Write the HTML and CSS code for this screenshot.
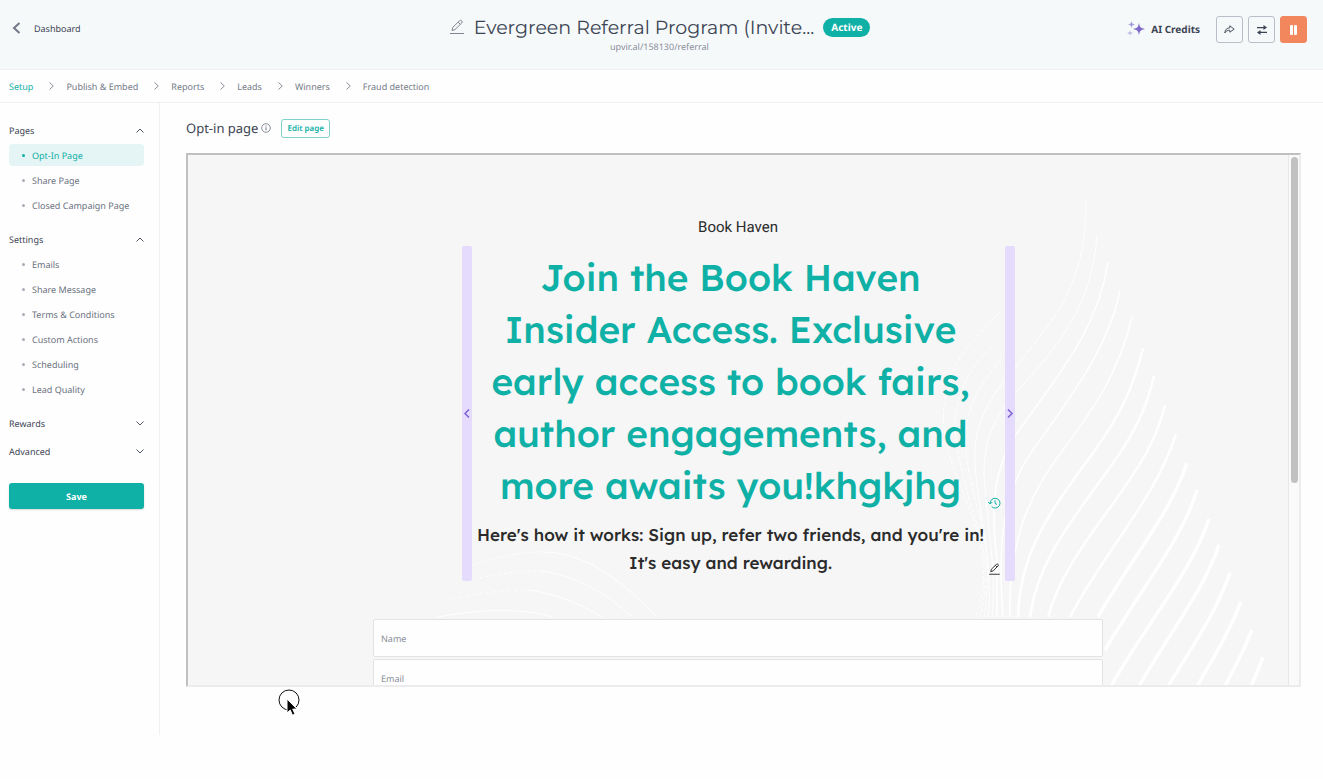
FILE: index.html
```html
<!DOCTYPE html>
<html lang="en">
<head>
  <meta charset="UTF-8">
  <meta name="viewport" content="width=device-width, initial-scale=1.0">
  <title>Evergreen Referral Program - Setup</title>
  <link rel="stylesheet" href="styles.css">
</head>
<body>
  <!-- Top bar -->
  <header class="topbar">
    <a href="#" class="back-link">
      <svg width="9" height="12" viewBox="0 0 9 12" fill="none" stroke="#747786" stroke-width="2"><path d="M7.500 1L2 6l5.500 5"/></svg>
      Dashboard
    </a>
    <div class="campaign">
      <div class="campaign-row">
        <button class="icon-btn" aria-label="Rename campaign">
          <svg width="16" height="16" viewBox="0 0 16 16" fill="none" stroke="#82858f"><path d="M1 14.500h14M3 11.500l.8-3.200L10.500 1.800a1.400 1.400 0 0 1 2.200 2.200L6 10.600zM9.200 3.200l2.100 2.100"/></svg>
        </button>
        <h1 class="campaign-title">Evergreen Referral Program (Invite...</h1>
        <span class="badge">Active</span>
      </div>
      <a href="#" class="campaign-url">upvir.al/158130/referral</a>
    </div>
    <div class="actions">
      <a href="#" class="credits">
        <svg width="18" height="16" viewBox="0 0 18 16"><path fill="#7e6bc9" d="M12 2c.8 4 1.500 5 6 6-4.500 1-5.200 2-6 6-.8-4-1.500-5-6-6 4.500-1 5.200-2 6-6z"/><path fill="#a79bdc" d="M4.500 0c.5 2.400 1 3 3.500 3.500C5.500 4 5 4.600 4.500 7 4 4.600 3.500 4 1 3.500 3.500 3 4 2.400 4.500 0z"/><path fill="#c4bbe6" d="M3 9c.4 2 .8 2.500 3 3-2.200.5-2.600 1-3 3-.4-2-.8-2.500-3-3 2.200-.5 2.600-1 3-3z"/></svg>
        AI Credits
      </a>
      <button class="square-btn" aria-label="Share">
        <svg width="11" height="9" viewBox="0 0 11 9" fill="none" stroke="#4c5361" stroke-linejoin="round"><path d="M.8 8C1 4.600 2.800 3 5.800 2.800V.8L10.200 4.200 5.800 7.200V5.200C3.600 5.200 2 6 .8 8z"/></svg>
      </button>
      <button class="square-btn" aria-label="Switch campaign">
        <svg width="10" height="10" viewBox="0 0 10 10" fill="#3c4454"><path d="M0 2h6.500V0L10 2.600 6.500 5V3.300H0zM10 6.700H3.500V5L0 7.400 3.500 10V8H10z"/></svg>
      </button>
      <button class="square-btn square-btn-pause" aria-label="Pause campaign">
        <svg width="8" height="10" viewBox="0 0 8 10" fill="#fff"><rect width="3" height="10" rx="1"/><rect x="4" width="3" height="10" rx="1"/></svg>
      </button>
    </div>
  </header>

  <!-- Steps -->
  <nav class="steps">
    <a href="#" class="step active">Setup</a>
    <svg class="step-arrow" width="5" height="8" viewBox="0 0 5 8"><path d="M.5.5L4.300 4 .5 7.500"/></svg>
    <a href="#" class="step">Publish &amp; Embed</a>
    <svg class="step-arrow" width="5" height="8" viewBox="0 0 5 8"><path d="M.5.5L4.300 4 .5 7.500"/></svg>
    <a href="#" class="step">Reports</a>
    <svg class="step-arrow" width="5" height="8" viewBox="0 0 5 8"><path d="M.5.5L4.300 4 .5 7.500"/></svg>
    <a href="#" class="step">Leads</a>
    <svg class="step-arrow" width="5" height="8" viewBox="0 0 5 8"><path d="M.5.5L4.300 4 .5 7.500"/></svg>
    <a href="#" class="step">Winners</a>
    <svg class="step-arrow" width="5" height="8" viewBox="0 0 5 8"><path d="M.5.5L4.300 4 .5 7.500"/></svg>
    <a href="#" class="step">Fraud detection</a>
  </nav>

  <div class="workspace">
    <!-- Sidebar -->
    <aside class="sidebar">
      <section class="group">
        <button class="group-head" aria-expanded="true">Pages
          <svg class="chevron" width="8" height="5" viewBox="0 0 8 5"><path d="M.5 4.500L4 1l3.500 3.500"/></svg>
        </button>
        <ul class="group-list">
          <li><a href="#" class="group-item active">Opt-In Page</a></li>
          <li><a href="#" class="group-item">Share Page</a></li>
          <li><a href="#" class="group-item">Closed Campaign Page</a></li>
        </ul>
      </section>
      <section class="group">
        <button class="group-head" aria-expanded="true">Settings
          <svg class="chevron" width="8" height="5" viewBox="0 0 8 5"><path d="M.5 4.500L4 1l3.500 3.500"/></svg>
        </button>
        <ul class="group-list">
          <li><a href="#" class="group-item">Emails</a></li>
          <li><a href="#" class="group-item">Share Message</a></li>
          <li><a href="#" class="group-item">Terms &amp; Conditions</a></li>
          <li><a href="#" class="group-item">Custom Actions</a></li>
          <li><a href="#" class="group-item">Scheduling</a></li>
          <li><a href="#" class="group-item">Lead Quality</a></li>
        </ul>
      </section>
      <section class="group closed">
        <button class="group-head" aria-expanded="false">Rewards
          <svg class="chevron" width="8" height="5" viewBox="0 0 8 5"><path d="M.5.5L4 4 7.500.5"/></svg>
        </button>
      </section>
      <section class="group closed">
        <button class="group-head" aria-expanded="false">Advanced
          <svg class="chevron" width="8" height="5" viewBox="0 0 8 5"><path d="M.5.5L4 4 7.500.5"/></svg>
        </button>
      </section>
      <button class="save-btn">Save</button>
    </aside>

    <main class="editor">
      <div class="editor-head">
        <h2 class="editor-title">Opt-in page</h2>
        <svg width="10" height="10" viewBox="0 0 10 10" fill="none" stroke="#6b7280"><circle cx="5" cy="5" r="4.300" stroke-width=".8"/><path d="M5 4.300v3M5 2.500v1"/></svg>
        <button class="edit-btn">Edit page</button>
      </div>

      <div class="preview">
        <div class="preview-page">
          <!-- Wave lines behind the page -->
          <svg class="waves" viewBox="188 155 1100 530" preserveAspectRatio="xMidYMin slice" fill="none" stroke="#fff">
            <g stroke-width="1">
              <path stroke-dasharray="3 2" d="M473 565Q515 551 545 552"/>
              <path d="M545 552C590 553 625 585 657 617"/>
              <path stroke-dasharray="3 3" d="M480 578Q510 571 540 571"/>
              <path d="M540 571C575 575 608 594 632 617"/>
              <path stroke-dasharray="3 4" d="M452 599Q490 590 530 590"/>
              <path d="M530 590C557 594 580 604 602 617"/>
              <path d="M438 617C475 610 520 607 553 617"/>
            </g>
            <g stroke-width="1">
              <path stroke-dasharray="4 2" d="M1000 312C970 342 953 362 948 385C938 420 946 448 958 480C978 530 993 570 976 617"/>
              <path stroke-dasharray="4 2" d="M992 347C965 372 957 396 955 425C956 465 974 510 981 540C988 570 986 595 980 617"/>
              <path stroke-dasharray="5 2" d="M1002 359C978 385 969 405 965 435C966 475 982 520 986 550C989 580 987 600 984 617"/>
              <path stroke-dasharray="8 2" d="M1086 201C1086 290 1052 320 1015 368"/>
              <path d="M1015 368C978 410 974 435 975 465C979 515 994 570 988 617"/>
              <path d="M1097 235C1092 305 1060 345 1015 393C988 425 984 450 984 475C987 525 997 570 992 617"/>
            </g>
            <g stroke-width="1.500">
              <path d="M1108 262C1098 330 1058 375 1015 436C990 475 992 520 997 560V617"/>
              <path d="M1120 290C1110 345 1072 395 1033 450C1000 495 998 555 1003 617"/>
              <path d="M1132 317C1118 375 1094 408 1063 450C1025 498 1008 550 1010 617"/>
            </g>
            <g stroke-width="2.500">
              <path d="M1143 348C1133 390 1118 418 1095 450C1050 512 1020 550 1018 617"/>
              <path d="M1154 376C1147 405 1138 425 1122 450C1080 512 1038 555 1030 617"/>
              <path d="M1165 405C1160 425 1154 438 1148 450C1115 510 1065 555 1048 617"/>
              <path d="M1176 434C1155 500 1105 550 1070 617"/>
            </g>
            <g stroke-width="3.500">
              <path d="M1187 463C1170 515 1130 560 1098 617"/>
              <path d="M1197 490C1182 540 1140 590 1105 650"/>
              <path d="M1209 519C1190 575 1145 625 1110 688"/>
              <path d="M1219 545C1204 590 1168 635 1138 688"/>
              <path d="M1230 573C1215 615 1190 650 1167 688"/>
              <path d="M1241 602C1228 635 1212 660 1196 688"/>
              <path d="M1252 630C1244 650 1235 667 1224 688"/>
              <path d="M1263 657C1259 668 1255 678 1250 688"/>
            </g>
          </svg>

          <p class="brand">Book Haven</p>

          <div class="edit-block">
            <button class="block-handle" aria-label="Previous version">
              <svg width="6" height="9" viewBox="0 0 6 9"><path d="M5 .5l-4 4 4 4"/></svg>
            </button>
            <div class="block-body">
              <div class="block-row">
                <h3 class="headline">Join the Book Haven<br>Insider Access. Exclusive<br>early access to book fairs,<br>author engagements, and<br>more awaits you!khgkjhg</h3>
                <button class="icon-btn" aria-label="Text history">
                  <svg width="13" height="12" viewBox="0 0 13 12" fill="none" stroke="#0fb0a6"><path d="M2.200 6.500A4.900 4.900 0 1 1 3.600 9.600M0 5l2.200 2 2-2M7 3.300v3l2 1.200"/></svg>
                </button>
              </div>
              <div class="block-row">
                <p class="subline">Here's how it works: Sign up, refer two friends, and you're in!<br>It's easy and rewarding.</p>
                <button class="icon-btn" aria-label="Edit text">
                  <svg width="13" height="12" viewBox="0 0 16 16" fill="none" stroke="#333" stroke-width="1.300"><path d="M1 15h14M3 11.500l.8-3.200L10.500 1.800a1.400 1.400 0 0 1 2.200 2.200L6 10.600zM9.200 3.200l2.100 2.100"/></svg>
                </button>
              </div>
            </div>
            <button class="block-handle" aria-label="Next version">
              <svg width="6" height="9" viewBox="0 0 6 9"><path d="M1 .5l4 4-4 4"/></svg>
            </button>
          </div>

          <form class="signup">
            <input type="text" class="field" placeholder="Name" aria-label="Name">
            <input type="email" class="field" placeholder="Email" aria-label="Email">
          </form>
        </div>
        <div class="scrollbar"><div class="scroll-thumb"></div></div>
      </div>
    </main>
  </div>

  <!-- Pointer over the page -->
  <svg class="pointer" width="24" height="30" viewBox="0 0 24 30"><circle cx="12" cy="12" r="10" fill="none" stroke="#111"/><path d="M10 11v14l3.200-3 2.300 5.200 2.500-1.100-2.300-5H20z" fill="#000" stroke="#fff"/></svg>
</body>
</html>
```
FILE: styles.css
```css
* {
  box-sizing: border-box;
}

body {
  display: flex;
  flex-direction: column;
  height: 100vh;
  margin: 0;
  padding-bottom: 44px;
  background-color: #fefefe;
  color: #3c4454;
  font-family: "Noto Sans", sans-serif;
  font-size: 9px;
  text-rendering: geometricPrecision;
}

h1, h2, h3, p, ul {
  margin: 0;
  padding: 0;
  font-weight: 400;
}

a {
  color: inherit;
  text-decoration: none;
}

button {
  padding: 0;
  border: none;
  background: none;
  color: inherit;
  font: inherit;
  text-rendering: inherit;
  cursor: pointer;
}

svg {
  display: block;
  flex-shrink: 0;
}

/* Top bar */
.topbar {
  display: grid;
  grid-template-columns: 1fr auto 1fr;
  height: 70px;
  padding: 15px 16px 0 12px;
  border-bottom: 1px solid #eff2f3;
  background-color: #f5f9fa;
}

.back-link {
  display: flex;
  align-items: center;
  gap: 13px;
  height: 26px;
}

.campaign {
  text-align: center;
}

.campaign-row {
  display: flex;
  align-items: center;
  gap: 9px;
  height: 24px;
}

.campaign-title {
  font-family: Montserrat, Inter, sans-serif;
  font-size: 19px;
}

.badge {
  padding: 0 8px;
  border-radius: 10px;
  background-color: #0fb0a6;
  color: #fff;
  font-size: 10px;
  font-weight: 700;
  line-height: 19px;
}

.campaign-url {
  color: #8b8f9a;
  line-height: 16px;
}

.actions {
  display: flex;
  justify-content: flex-end;
  gap: 5px;
}

.credits {
  display: flex;
  align-items: center;
  gap: 6px;
  height: 28px;
  margin-right: 11px;
  font-size: 10px;
  font-weight: 700;
}

.square-btn {
  display: flex;
  align-items: center;
  justify-content: center;
  width: 27px;
  height: 27px;
  margin-top: 1px;
  border: 1px solid #b9bec8;
  border-radius: 3px;
}

.square-btn-pause {
  border-color: #f2865c;
  background-color: #f2865c;
}

/* Steps */
.steps {
  display: flex;
  align-items: center;
  gap: 12px;
  height: 33px;
  padding-left: 9px;
  border-bottom: 1px solid #eff0f2;
  color: #747a87;
}

.step.active {
  color: #0fb0a6;
}

.step-arrow {
  margin-left: 4px;
  fill: none;
  stroke: #8b8f9a;
}

/* Sidebar */
.workspace {
  display: flex;
  flex: 1;
  min-height: 0;
}

.sidebar {
  width: 160px;
  padding: 16px 15px 0 9px;
  border-right: 1px solid #eff0f2;
}

.group {
  margin-bottom: 12px;
}

.group.closed {
  margin-bottom: 6px;
}

.group-head {
  display: flex;
  align-items: center;
  justify-content: space-between;
  width: 100%;
  height: 22px;
}

.chevron {
  fill: none;
  stroke: #4c5361;
}

.group-list {
  display: grid;
  gap: 3px;
  margin-top: 3px;
  list-style: none;
}

.group-item {
  display: flex;
  align-items: center;
  gap: 7px;
  height: 22px;
  padding-left: 13px;
  border-radius: 4px;
  color: #6b7280;
}

.group-item::before {
  content: "";
  width: 3px;
  height: 3px;
  border-radius: 50%;
  background-color: #a9adb8;
}

.group-item.active {
  background-color: #e5f5f5;
  color: #0fb0a6;
}

.group-item.active::before {
  background-color: #0fb0a6;
}

.save-btn {
  width: 100%;
  height: 26px;
  margin-top: 15px;
  border-radius: 3px;
  background-color: #0fb0a6;
  box-shadow: 0 1px 2px rgba(0, 0, 0, 0.15);
  color: #fff;
  font-weight: 700;
}

/* Editor */
.editor {
  display: flex;
  flex: 1;
  flex-direction: column;
  padding: 15px 22px 48px 26px;
}

.editor-head {
  display: flex;
  align-items: center;
  gap: 3px;
  height: 20px;
  margin-bottom: 15px;
}

.editor-title {
  font-size: 13px;
}

.edit-btn {
  height: 19px;
  margin-left: 7px;
  padding: 0 5px;
  border: 1px solid #7fd2cc;
  border-radius: 3px;
  color: #0fb0a6;
  font-size: 8px;
  font-weight: 600;
}

.preview {
  display: flex;
  flex: 1;
  min-height: 0;
  overflow: hidden;
  border: 2px solid #c0c0c0;
  border-right-color: #ececee;
  border-bottom-color: #ececee;
}

.preview-page {
  position: relative;
  flex: 1;
  overflow: hidden;
  padding-top: 62px;
  background-color: #f6f6f6;
}

.waves {
  position: absolute;
  top: 0;
  left: 0;
  width: 100%;
  height: 100%;
}

.brand {
  position: relative;
  color: #2b2b2b;
  font-family: Roboto, sans-serif;
  font-size: 15px;
  line-height: 20px;
  text-align: center;
}

.edit-block {
  position: relative;
  display: flex;
  width: 553px;
  max-width: 100%;
  margin: 9px auto 38px;
}

.block-handle {
  display: flex;
  align-items: center;
  justify-content: center;
  width: 10px;
  border-radius: 2px;
  background-color: #e4dbfd;
}

.block-handle path {
  fill: none;
  stroke: #7e5fd0;
  stroke-width: 1.5;
}

.block-body {
  flex: 1;
  padding: 6px 4px 3px 2px;
}

.block-row {
  display: flex;
  align-items: flex-end;
}

.block-row + .block-row {
  margin-top: 10px;
}

.block-row .icon-btn {
  padding-bottom: 3px;
}

.headline,
.subline {
  flex: 1;
  font-family: Lexend, Inter, sans-serif;
  font-weight: 500;
  text-align: center;
  white-space: nowrap;
}

.headline {
  color: #0fb0a6;
  font-size: 37px;
  line-height: 52px;
}

.subline {
  color: #2b2b2b;
  font-size: 17px;
  line-height: 28px;
}

.signup {
  position: relative;
  display: grid;
  gap: 2px;
  width: 730px;
  max-width: 100%;
  margin: 0 auto;
}

.field {
  height: 38px;
  padding: 0 7px;
  border: 1px solid #e2e3e5;
  border-radius: 2px;
  background-color: #fefefe;
  font: inherit;
  text-rendering: inherit;
}

.field::placeholder {
  color: #8b8f9a;
}

.scrollbar {
  width: 11px;
  padding: 2px;
  border-left: 1px solid #e8e8e8;
  background-color: #fafafa;
}

.scroll-thumb {
  width: 7px;
  height: 62%;
  border-radius: 4px;
  background-color: #c1c1c1;
}

.pointer {
  position: absolute;
  top: 688px;
  left: 277px;
}
```
